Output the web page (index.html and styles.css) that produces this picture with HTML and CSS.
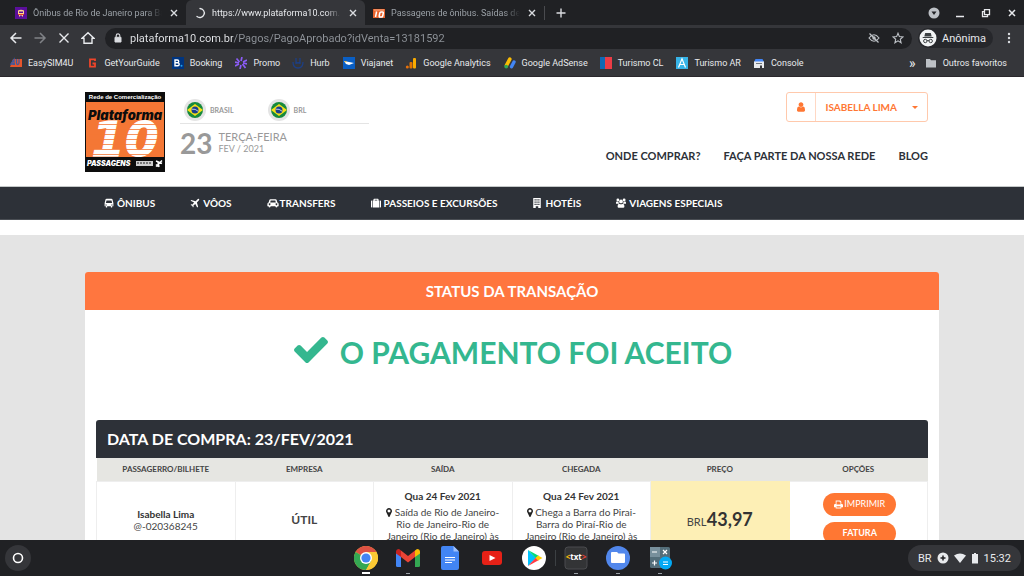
FILE: index.html
```html
<!DOCTYPE html>
<html lang="pt-BR">
<head>
    <meta charset="UTF-8">
    <meta name="viewport" content="width=device-width, initial-scale=1.0">
    <title>Plataforma 10 - Pagamento aprovado</title>
    <link rel="stylesheet" href="styles.css">
</head>
<body>
    <!-- shared icons -->
    <svg class="sprite" aria-hidden="true">
        <symbol id="i-close" viewBox="0 0 8 8"><path d="M1 1l6 6M7 1L1 7" fill="none" stroke="currentColor" stroke-width="1.4"/></symbol>
        <symbol id="i-pin" viewBox="384 128 1024 1536"><path d="M1152 640q0-106-75-181t-181-75-181 75-75 181 75 181 181 75 181-75 75-181zm256 0q0 109-33 179l-364 774q-16 33-47.5 52t-67.5 19-67.5-19-46.5-52l-365-774q-33-70-33-179 0-212 150-362t362-150 362 150 150 362z" fill="currentColor"/></symbol>
        <symbol id="i-flag" viewBox="0 0 22 22">
            <circle cx="11" cy="11" r="11" fill="#e4e4e4"/>
            <circle cx="11" cy="11" r="8" fill="#178a3c"/>
            <path d="M3 11l8-6 8 6-8 6z" fill="#f7e017"/>
            <circle cx="11" cy="11" r="3.5" fill="#1b3f8b"/>
            <path d="M7.8 10.2q3.500-.6 6.300 2" fill="none" stroke="#fff" stroke-width=".7"/>
        </symbol>
    </svg>

    <header class="browser">
        <div class="tabstrip">
            <div class="tab">
                <svg class="favicon" viewBox="0 0 12 12"><path fill="#5b0f9b" d="M0 0h12v12H0z"/><path fill="#ffd58a" d="M3 3.500Q6 2 9 3.500V8H8v1.500H7V8.500H5v1H4V8H3z"/><path fill="#5b0f9b" d="M4 4.500h4V6H4z"/><path fill="#e0402f" d="M3 7h6v1H3z"/></svg>
                <span class="tab-title">Ônibus de Rio de Janeiro para Ba</span>
                <button class="tab-close" aria-label="Fechar"><svg><use href="#i-close"/></svg></button>
            </div>
            <div class="tab active">
                <svg class="favicon" viewBox="0 0 12 12"><path d="M6 1.500A4.500 4.500 0 1 1 3 9.500" fill="none" stroke="#e8eaed" stroke-width="1.3" stroke-linecap="round"/></svg>
                <span class="tab-title">https://www.plataforma10.com.</span>
                <button class="tab-close" aria-label="Fechar"><svg><use href="#i-close"/></svg></button>
            </div>
            <div class="tab">
                <svg class="favicon" viewBox="0 0 12 12"><path fill="#e8632c" d="M0 1h12v10H0z"/><path fill="#2a1a14" d="M0 1h12v1H0z"/><path fill="#f9b08d" d="M1 2.500h10v1H1z"/><path d="M3.600 4.500L2.500 10M8 5h1.500q1 0 .8 1L9.700 9q-.2 1-1.200 1H7q-1 0-.8-1l.6-3q.2-1 1.200-1z" fill="none" stroke="#fff" stroke-width="1.500"/></svg>
                <span class="tab-title">Passagens de ônibus. Saídas de</span>
                <button class="tab-close" aria-label="Fechar"><svg><use href="#i-close"/></svg></button>
            </div>
            <button class="new-tab" aria-label="Nova guia"><svg viewBox="0 0 10 10"><path d="M5 .5v9M.5 5h9" stroke="#dadce0" stroke-width="1.4"/></svg></button>
            <div class="window-buttons">
                <button aria-label="Pesquisar guias"><svg viewBox="0 0 12 12"><circle cx="6" cy="6" r="5.500" fill="#bdc1c6"/><path d="M3.500 4.600h5L6 8z" fill="#202124"/></svg></button>
                <button aria-label="Minimizar"><svg viewBox="0 0 12 12"><path d="M2 9.500h8" stroke="#e8eaed" stroke-width="1.500"/></svg></button>
                <button aria-label="Restaurar"><svg viewBox="0 0 12 12"><path d="M4.500 2.700h5v5h-5zM4.500 4.700h-2v5h5v-2" fill="none" stroke="#e8eaed" stroke-width="1.300"/></svg></button>
                <button aria-label="Fechar janela"><svg viewBox="0 0 12 12"><path d="M3 3l6 6M9 3L3 9" stroke="#e8eaed" stroke-width="1.500"/></svg></button>
            </div>
        </div>

        <div class="toolbar">
            <button aria-label="Voltar"><svg viewBox="0 0 14 14"><path d="M12.500 7H2.500M7 2L2 7l5 5" fill="none" stroke="#e8eaed" stroke-width="1.500"/></svg></button>
            <button aria-label="Avançar"><svg viewBox="0 0 14 14"><path d="M1.500 7h10M7 2l5 5-5 5" fill="none" stroke="#808387" stroke-width="1.500"/></svg></button>
            <button aria-label="Parar"><svg viewBox="0 0 14 14"><path d="M2.500 2.500l9 9M11.500 2.500l-9 9" fill="none" stroke="#e8eaed" stroke-width="1.400"/></svg></button>
            <button aria-label="Início"><svg viewBox="0 0 14 14"><path d="M1 7.300L7 1.700l6 5.600H11V12.300H3V7.300z" fill="none" stroke="#e8eaed" stroke-width="1.400"/></svg></button>
            <div class="omnibox">
                <svg viewBox="0 0 10 10"><path d="M2 4.300h6v4.700H2z" fill="#dadce0" stroke="#dadce0"/><path d="M3.200 4V2.700a1.800 1.800 0 0 1 3.600 0V4" fill="none" stroke="#dadce0" stroke-width="1.100"/></svg>
                <input type="text" class="url" aria-label="Endereço" value="plataforma10.com.br/Pagos/PagoAprobado?idVenta=13181592">
                <button aria-label="Cookies bloqueados"><svg viewBox="0 0 12 12"><path d="M1 6q5-6.500 10 0-5 6.500-10 0z" fill="none" stroke="#bdc1c6" stroke-width="1.200"/><circle cx="6" cy="6" r="1.700" fill="#bdc1c6"/><path d="M1.500 1.500l9 9" stroke="#bdc1c6" stroke-width="1.300"/></svg></button>
                <button aria-label="Adicionar aos favoritos"><svg viewBox="0 0 12 12"><path d="M6 1.200l1.400 3.400 3.600.3-2.700 2.400.8 3.500L6 8.900l-3.100 1.900.8-3.500L1 4.900l3.600-.3z" fill="none" stroke="#bdc1c6" stroke-width="1.100"/></svg></button>
            </div>
            <button class="profile">
                <svg viewBox="0 0 18 18"><circle cx="9" cy="9" r="8.500" fill="#f1f3f4"/><path d="M6.200 4h5.600l.9 3.600H5.300zM3.700 8h10.600v1H3.700z" fill="#3c4043"/><path d="M8 11.800q1-.6 2 0" fill="none" stroke="#3c4043"/><circle cx="6.300" cy="12" r="1.700" fill="none" stroke="#3c4043"/><circle cx="11.700" cy="12" r="1.700" fill="none" stroke="#3c4043"/></svg>
                Anônima
            </button>
            <button class="more" aria-label="Menu"><svg viewBox="0 0 4 12"><g fill="#dadce0"><circle cx="2" cy="2" r="1.200"/><circle cx="2" cy="6" r="1.200"/><circle cx="2" cy="10" r="1.200"/></g></svg></button>
        </div>

        <nav class="bookmarks">
            <a href="#"><svg viewBox="0 0 12 12"><path d="M3 2h9v8H0z" fill="#e4552c"/><path d="M4 8V2.500L1 7h4M6.500 2v4q0 1.500 1.200 1.500T9 6V2" fill="none" stroke="#3b5aa0" stroke-width="1.300"/></svg>EasySIM4U</a>
            <a href="#"><svg viewBox="0 0 12 12"><path d="M9 4V2.300H4v7.400h5V6.500H6.500" fill="none" stroke="#f0452a" stroke-width="1.800"/></svg>GetYourGuide</a>
            <a href="#"><svg viewBox="0 0 12 12"><path d="M0 0h12v12H0z" fill="#003580"/><path d="M3 3h2.300a1.300 1.300 0 0 1 0 2.800H3zM3 5.800h2.700a1.500 1.500 0 0 1 0 3H3z" fill="none" stroke="#fff" stroke-width="1.400"/><circle cx="9.500" cy="8.700" r="1" fill="#21a0ec"/></svg>Booking</a>
            <a href="#"><svg viewBox="0 0 12 12"><path d="M7 0L6 4M5 12l1-4M1.500 1.500L4.500 5M7.500 7l3 4M12 3L8 5M0 9l4-2M0 5l4 1M8 6l4 1" stroke="#8b5cf6" stroke-width="1.700"/></svg>Promo</a>
            <a href="#"><svg viewBox="0 0 12 12"><path d="M1 5q0 6 5 6t5-6M4 1v6M8 1v6M4 5q2 2 4 0" fill="none" stroke="#1d3f84" stroke-width="1.300"/></svg>Hurb</a>
            <a href="#"><svg viewBox="0 0 12 12"><path d="M0 0h12v12H0z" fill="#0a5fc4"/><path d="M1 4l10 2-5 2-3-1z" fill="#fff"/><path d="M1 4l3 .6-1.500 1z" fill="#f4b51e"/></svg>Viajanet</a>
            <a href="#"><svg viewBox="0 0 12 12"><rect x="8" y="1" width="3" height="10.500" rx="1" fill="#f9ab00"/><rect x="4.500" y="5" width="3" height="6.500" rx="1" fill="#e37400"/><circle cx="2.300" cy="10" r="1.500" fill="#e8710a"/></svg>Google Analytics</a>
            <a href="#"><svg viewBox="0 0 12 12"><path d="M5.800 2.200L2.500 8.300" stroke="#fbbc04" stroke-width="3.600" stroke-linecap="round"/><path d="M10 5L7.500 9.700" stroke="#4285f4" stroke-width="3.400" stroke-linecap="round"/><circle cx="2.200" cy="9.600" r="1.900" fill="#34a853"/></svg>Google AdSense</a>
            <a href="#"><svg viewBox="0 0 12 12"><path d="M0 0h5v12H0z" fill="#0f69b4"/><path d="M5 0h7v12H5z" fill="#eb3c46"/></svg>Turismo CL</a>
            <a href="#"><svg viewBox="0 0 12 12"><path d="M0 0h12v12H0z" fill="#37b4e8"/><path d="M2.500 10.500L6 1.800l3.500 8.700M3.800 7.500h4.400" fill="none" stroke="#fff" stroke-width="1.200"/></svg>Turismo AR</a>
            <a href="#"><svg viewBox="0 0 12 12"><path d="M2.500 2h7L11 5H1z" fill="#4285f4"/><path d="M1 4.500h10V11H9V8.500H7V11H1z" fill="#e8eaed"/><path d="M3 6h6v1H3z" fill="#70757a"/></svg>Console</a>
            <span class="overflow">»</span>
            <a href="#"><svg viewBox="0 0 12 12"><path d="M1 2h4l1 1.300h5V10.500H1z" fill="#bdc1c6"/></svg>Outros favoritos</a>
        </nav>
    </header>

    <main class="page">
        <div class="site-header container">
            <a class="logo" href="#">
                <svg viewBox="0 0 80 80" role="img" aria-label="Plataforma 10">
                    <path d="M0 0h80v80H0z" fill="#0d0d0d"/>
                    <path d="M1 10h78v55H1z" fill="#f47735"/>
                    <text x="40" y="7" class="logo-top">Rede de Comercialização</text>
                    <text x="40" y="28" class="logo-name">Plataforma</text>
                    <text x="40" y="64" class="logo-ten">10</text>
                    <path d="M1 32.500h78M1 37.500h78M1 42.500h78M1 47.500h78M1 52.500h78M1 57.500h78M1 62.500h78" stroke="#f47735" stroke-width=".8"/>
                    <text x="2" y="74" class="logo-foot">PASSAGENS</text>
                    <path d="M51 69h17v5H51z" fill="#cfcfcf"/><path d="M52 71h15" stroke="#222" stroke-dasharray="2 1"/>
                    <path d="M71 74.500l6-6M71 69l6 2.500M74 75l-1-5M71 72.500l2 2" stroke="#fff" stroke-width="1.500" fill="none"/>
                </svg>
            </a>
            <div class="locale">
                <div class="flags">
                    <button><svg><use href="#i-flag"/></svg>BRASIL</button>
                    <button><svg><use href="#i-flag"/></svg>BRL</button>
                </div>
                <div class="date">
                    <strong>23</strong>
                    <div><span class="weekday">TERÇA-FEIRA</span><span class="month">FEV / 2021</span></div>
                </div>
            </div>
            <div class="account">
                <button class="user">
                    <span class="user-icon"><svg viewBox="256 128 1280 1536"><path d="M1536 1399q0 109-62.500 187t-150.500 78h-854q-88 0-150.500-78t-62.500-187q0-85 8.500-160.500t31.500-152 58.500-131 94-89 134.500-34.500q131 128 313 128t313-128q76 0 134.500 34.500t94 89 58.500 131 31.500 152 8.500 160.500zm-256-887q0 159-112.500 271.500t-271.500 112.500-271.500-112.500-112.500-271.500 112.500-271.500 271.500-112.500 271.500 112.500 112.500 271.500z" fill="currentColor"/></svg></span>
                    <span class="user-name">ISABELLA LIMA</span>
                    <svg class="caret" viewBox="0 0 6 3"><path d="M0 0h6L3 3z" fill="currentColor"/></svg>
                </button>
                <nav class="links">
                    <a href="#">ONDE COMPRAR?</a>
                    <a href="#">FAÇA PARTE DA NOSSA REDE</a>
                    <a href="#">BLOG</a>
                </nav>
            </div>
        </div>

        <nav class="main-nav">
            <div class="container">
                <a href="#"><svg viewBox="0 0 16 16"><path fill-rule="evenodd" d="M4 1h8q2 0 2 3l1 4v5h-2v2h-2v-2H5v2H3v-2H1V8l1-4q0-3 2-3zm0 3L3 8h10l-1-4zm0 6.500a1 1 0 1 0 0 1.500zm8 0v1.500a1 1 0 1 0 0-1.500z" fill="currentColor"/></svg>ÔNIBUS</a>
                <a href="#"><svg viewBox="0 0 16 16"><path d="M14.500 1.500q1 1-.8 2.800L11 7l2 7-1.500 1L8.500 9.500 5.500 12l.3 2-1 1-1.300-2.500L1 11l1-1 2 .3 2.500-3L1 4.500 2 3l7 2 2.700-2.700q1.800-1.800 2.800-.8z" fill="currentColor"/></svg>VÔOS</a>
                <a href="#" class="tight"><svg viewBox="0 0 18 16"><path fill-rule="evenodd" d="M5 2h8q1.500 0 2 1.500L16 7q2 .5 2 2.500V13h-2v1.500q-1.500 1.500-3 0V13H5v1.500q-1.500 1.500-3 0V13H0V9.500Q0 7.500 2 7l1-3.500Q3.500 2 5 2zm.3 2L4.500 7h9l-.8-3zM3.500 8.500a1.400 1.400 0 1 0 .1 0zm11 0a1.400 1.400 0 1 0 .1 0z" fill="currentColor"/></svg>TRANSFERS</a>
                <a href="#"><svg viewBox="0 0 16 16"><path fill-rule="evenodd" d="M4 4V2q0-1 1-1h6q1 0 1 1v2h1v11H3V4zm2 0h4V2.700H6zM0 5q0-1 1-1h1v11H1q-1 0-1-1zm14-1h1q1 0 1 1v9q0 1-1 1h-1z" fill="currentColor"/></svg>PASSEIOS E EXCURSÕES</a>
                <a href="#"><svg viewBox="0 0 16 16"><path fill-rule="evenodd" d="M2 0h12v16h-4v-3H6v3H2zm2 2v2h2V2zm3 0v2h2V2zm3 0v2h2V2zM4 5.500v2h2v-2zm3 0v2h2v-2zm3 0v2h2v-2zM4 9v2h2V9zm3 0v2h2V9zm3 0v2h2V9z" fill="currentColor"/></svg>HOTÉIS</a>
                <a href="#"><svg viewBox="0 0 16 16"><g fill="currentColor"><circle cx="3" cy="3" r="2.300"/><circle cx="13" cy="3" r="2.300"/><circle cx="8" cy="5.500" r="3"/><path d="M0 9V7q0-1.500 1.500-1.500H4q0 2 1 3.500zM16 9V7q0-1.500-1.500-1.500H12q0 2-1 3.500zM5 9q3 2 6 0 2.500.5 2.500 4 0 2.500-2 2.500h-7q-2 0-2-2.500Q2.500 9.500 5 9z"/></g></svg>VIAGENS ESPECIAIS</a>
            </div>
        </nav>

        <div class="content">
            <section class="card container">
                <h1>STATUS DA TRANSAÇÃO</h1>
                <p class="accepted">
                    <svg viewBox="121 334 1550 1188"><path d="M1671 566q0 40-28 68l-724 724-136 136q-28 28-68 28t-68-28l-136-136-362-362q-28-28-28-68t28-68l136-136q28-28 68-28t68 28l294 295 656-657q28-28 68-28t68 28l136 136q28 28 28 68z" fill="currentColor"/></svg>
                    O PAGAMENTO FOI ACEITO
                </p>
                <div class="purchase">
                    <h2>DATA DE COMPRA: 23/FEV/2021</h2>
                    <table>
                        <thead>
                            <tr>
                                <th>PASSAGERRO/BILHETE</th>
                                <th>EMPRESA</th>
                                <th>SAÍDA</th>
                                <th>CHEGADA</th>
                                <th>PREÇO</th>
                                <th>OPÇÕES</th>
                            </tr>
                        </thead>
                        <tbody>
                            <tr>
                                <td><strong>Isabella Lima</strong><br>@-020368245</td>
                                <td class="company">ÚTIL</td>
                                <td class="trip"><strong>Qua 24 Fev 2021</strong><svg><use href="#i-pin"/></svg> Saída de Rio de Janeiro-Rio de Janeiro-Rio de Janeiro (Rio de Janeiro) às</td>
                                <td class="trip"><strong>Qua 24 Fev 2021</strong><svg><use href="#i-pin"/></svg> Chega a Barra do Pirai-Barra do Piraí-Rio de Janeiro (Rio de Janeiro) às</td>
                                <td class="price">BRL <strong>43,97</strong></td>
                                <td class="options">
                                    <button class="print"><svg viewBox="0 0 16 16"><path fill-rule="evenodd" d="M3 1h8l2 2v4h1q2 0 2 2v4h-3v2H3v-2H0V9q0-2 2-2h1zm1.500 1.500V8h7V4H10V2.500zm0 8.500v2.500h7V11z" fill="currentColor"/></svg>IMPRIMIR</button>
                                    <button>FATURA</button>
                                </td>
                            </tr>
                        </tbody>
                    </table>
                </div>
            </section>
        </div>
    </main>

    <footer class="shelf">
        <button class="launcher" aria-label="Acesso rápido"><svg viewBox="0 0 26 26"><circle cx="13" cy="13" r="13" fill="#35363a"/><circle cx="13" cy="13" r="4.500" fill="none" stroke="#fff" stroke-width="1.600"/></svg></button>
        <div class="apps">
            <button class="app current" aria-label="Chrome"><svg viewBox="0 0 24 24"><circle cx="12" cy="12" r="12" fill="#fcc934"/><path d="M12 12L1.600 6A12 12 0 0 1 22.400 6z" fill="#dd5144"/><path d="M1.600 6A12 12 0 0 0 12 24l5.200-9z" fill="#34a853"/><path d="M12 6h10.400A12 12 0 0 1 12 24l5.200-9z" fill="#fcc934"/><circle cx="12" cy="12" r="6" fill="#fff"/><circle cx="12" cy="12" r="4.600" fill="#4285f4"/></svg></button>
            <button class="app open" aria-label="Gmail"><svg viewBox="0 0 24 24"><path d="M0 6h5v15H1.500Q0 21 0 19.500z" fill="#4285f4"/><path d="M19 6h5v13.500q0 1.500-1.500 1.500H19z" fill="#34a853"/><path d="M5 4.500l7 5.500 7-5.500V11l-7 5.500L5 11z" fill="#ea4335"/><path d="M0 6q0-3 3-3l2 1.500V11L0 7.500z" fill="#c5221f"/><path d="M24 6q0-3-3-3l-2 1.500V11l5-3.500z" fill="#fbbc04"/></svg></button>
            <button class="app" aria-label="Documentos"><svg viewBox="0 0 24 24"><path d="M5 0h10.500L21 5.500V22q0 2-2 2H5q-2 0-2-2V2q0-2 2-2z" fill="#4285f4"/><path d="M15.500 0L21 5.500h-5.500z" fill="#a1c2fa"/><path d="M7 11.500h10M7 14h10M7 16.500h7" stroke="#fff" stroke-width="1.200"/></svg></button>
            <button class="app" aria-label="YouTube"><svg viewBox="0 0 24 24"><rect x="2" y="5" width="20" height="14" rx="3" fill="#e62117"/><path d="M9.500 9l6 3-6 3z" fill="#fff"/></svg></button>
            <button class="app" aria-label="Play Store"><svg viewBox="0 0 24 24"><circle cx="12" cy="12" r="12" fill="#fff"/><path d="M6 4v16l8-8z" fill="#00c3ff"/><path d="M6 4l11 6-3 2.500z" fill="#00d97e"/><path d="M6 20l11-6-3-2.500z" fill="#ff3a44"/><path d="M16 9.500l4.500 2.500-4.500 2.500-2.500-2.500z" fill="#ffd000"/></svg></button>
            <button class="app open divided" aria-label="Text"><svg viewBox="0 0 24 24"><rect x="1" y="1" width="22" height="22" rx="3" fill="#333436" stroke="#4a4b4e"/><text x="12" y="14" class="txt-icon"><tspan fill="#fbbc04">&lt;</tspan>txt<tspan fill="#ea4335">&gt;</tspan></text></svg></button>
            <button class="app open" aria-label="Arquivos"><svg viewBox="0 0 24 24"><circle cx="12" cy="12" r="12" fill="#5187ec"/><path d="M6 6h5l1.500 1.500H18q1 0 1 1V16q0 1-1 1H6q-1 0-1-1V7q0-1 1-1z" fill="#fff"/></svg></button>
            <button class="app open" aria-label="Calculadora"><svg viewBox="0 0 24 24"><rect x="2" y="1" width="20" height="21" rx="1.500" fill="#546e7a"/><path d="M2 1h10v10H2z" fill="#78909c"/><path d="M4 6h5M15 4l4 4M19 4l-4 4M4 17h5M6.500 14.500v5" stroke="#fff" stroke-width="1.200"/><circle cx="17.500" cy="17" r="6.500" fill="#03a9f4"/><path d="M15 16h5M15 18.500h5" stroke="#fff" stroke-width="1.200"/></svg></button>
        </div>
        <button class="status">
            BR
            <svg viewBox="0 0 12 12"><circle cx="6" cy="6" r="5.500" fill="#e8eaed"/><path d="M6 3.500v5M3.500 6h5" stroke="#202124" stroke-width="1.500"/></svg>
            <svg viewBox="0 0 12 12"><path d="M0 3.500Q6-.5 12 3.500L6 11z" fill="#e8eaed"/></svg>
            <svg class="battery" viewBox="0 0 8 12"><path d="M1 2h2V1h2v1h2v9.500H1z" fill="#e8eaed"/></svg>
            <span>15:32</span>
        </button>
    </footer>
</body>
</html>
```
FILE: styles.css
```css
* {
    box-sizing: border-box;
}
body {
    margin: 0;
    height: 100vh;
    display: flex;
    flex-direction: column;
    overflow: hidden;
    font-family: Lato, "Liberation Sans", sans-serif;
    color: #2d3138;
    background-color: #fff;
}
button {
    font: inherit;
    color: inherit;
    background: none;
    border: none;
    padding: 0;
    cursor: pointer;
}
a {
    color: inherit;
    text-decoration: none;
}
svg {
    display: block;
    flex: none;
}
.sprite {
    position: absolute;
    width: 0;
    height: 0;
}

/* browser */
.browser {
    flex: none;
    font-family: Roboto, "Liberation Sans", sans-serif;
    font-size: 9px;
    color: #e8eaed;
    background-color: #35363a;
    border-bottom: 1px solid #2a272c;
}
.tabstrip {
    display: flex;
    align-items: center;
    height: 25px;
    padding-left: 7px;
    background-color: #202124;
}
.tab {
    display: flex;
    align-items: center;
    width: 179px;
    height: 25px;
    padding: 0 6px 0 8px;
    gap: 6px;
    color: #9aa0a6;
}
.tab.active {
    color: #e8eaed;
    background-color: #35363a;
    border-radius: 6px 6px 0 0;
}
.favicon {
    width: 12px;
    height: 12px;
}
.tab-title {
    flex: 1;
    overflow: hidden;
    white-space: nowrap;
    -webkit-mask-image: linear-gradient(90deg, #000 88%, transparent);
    mask-image: linear-gradient(90deg, #000 88%, transparent);
}
.tab-close svg {
    width: 8px;
    height: 8px;
    margin: 0 2px;
    color: #dadce0;
}
.new-tab {
    height: 14px;
    padding: 0 11px;
    border-left: 1px solid #4a4b4f;
}
.new-tab svg {
    width: 10px;
    height: 10px;
}
.window-buttons {
    display: flex;
    gap: 14px;
    margin-left: auto;
    padding-right: 6px;
}
.window-buttons svg {
    width: 12px;
    height: 12px;
}
.toolbar {
    display: flex;
    align-items: center;
    gap: 10px;
    height: 26px;
    padding: 0 9px;
}
.toolbar > button svg {
    width: 14px;
    height: 14px;
}
.omnibox {
    flex: 1;
    display: flex;
    align-items: center;
    gap: 12px;
    height: 21px;
    padding: 0 8px;
    border-radius: 11px;
    background-color: #202124;
}
.omnibox svg {
    width: 12px;
    height: 12px;
}
.omnibox > svg {
    width: 10px;
    height: 10px;
}
.url {
    flex: 1;
    min-width: 0;
    margin-left: -5px;
    padding: 0;
    border: none;
    outline: none;
    font: 11px Roboto, "Liberation Sans", sans-serif;
    color: transparent;
    background: linear-gradient(90deg, #e8eaed 103px, #8f949a 103px);
    -webkit-background-clip: text;
    background-clip: text;
}
.profile {
    display: flex;
    align-items: center;
    gap: 5px;
    height: 20px;
    padding: 0 7px 0 1px;
    margin: 0 2px 0 -4px;
    border-radius: 10px;
    font-size: 11px;
    background-color: #26272b;
}
.toolbar .profile svg {
    width: 18px;
    height: 18px;
}
.toolbar .more svg {
    width: 4px;
    height: 12px;
    margin: 0 4px 0 2px;
}
.bookmarks {
    display: flex;
    align-items: center;
    gap: 12px;
    height: 25px;
    padding: 0 17px 2px 10px;
    white-space: nowrap;
}
.bookmarks a {
    display: flex;
    align-items: center;
    gap: 6px;
}
.bookmarks a:nth-child(even) {
    margin-left: 1px;
}
.bookmarks svg {
    width: 12px;
    height: 12px;
}
.overflow {
    margin: 0 -3px 0 auto;
    font-size: 14px;
}

/* site */
.page {
    flex: 1;
    min-height: 0;
    overflow: hidden;
}
.container {
    width: 100%;
    max-width: 854px;
    margin: 0 auto;
}
.site-header {
    display: flex;
    gap: 15px;
    padding: 15px 11px 14px 0;
}
.logo svg {
    width: 80px;
    height: 80px;
}
.logo-top,
.logo-name,
.logo-ten {
    text-anchor: middle;
}
.logo-top {
    font: bold 6px "Liberation Sans", sans-serif;
    fill: #fff;
}
.logo-name {
    font: italic 900 13px Inter, sans-serif;
    fill: #0d0d0d;
}
.logo-ten {
    font: italic bold 48px "DejaVu Sans", sans-serif;
    fill: #fff;
    stroke: #fff;
    stroke-width: 1;
}
.logo-foot {
    font: italic 900 7px Inter, sans-serif;
    fill: #fff;
}
.locale {
    width: 189px;
    padding-top: 7px;
    color: #999;
}
.flags {
    display: flex;
    gap: 34px;
    padding: 0 0 2px 4px;
    border-bottom: 1px solid #e4e4e4;
}
.flags button {
    display: flex;
    align-items: center;
    gap: 4px;
    font-size: 7px;
    font-weight: bold;
}
.flags svg {
    width: 22px;
    height: 22px;
}
.date {
    display: flex;
    align-items: center;
    gap: 6px;
    padding-top: 3px;
}
.date strong {
    font-size: 28px;
    line-height: 32px;
}
.weekday,
.month {
    display: block;
    font-size: 11px;
    line-height: 12px;
}
.month {
    font-size: 9px;
}
.account {
    display: flex;
    flex-direction: column;
    align-items: flex-end;
    gap: 27px;
    margin-left: auto;
}
.user {
    display: flex;
    align-items: center;
    height: 30px;
    border: 1px solid #ffc9ac;
    border-radius: 3px;
    font-size: 10px;
    font-weight: bold;
    color: #ff7733;
}
.user-icon {
    display: flex;
    align-items: center;
    height: 28px;
    padding: 0 10px;
    border-right: 1px solid #ffd8c4;
}
.user-icon svg {
    width: 8px;
    height: 10px;
}
.user-name {
    padding: 0 15px 0 9px;
}
.caret {
    width: 6px;
    height: 3px;
    margin-right: 9px;
}
.links {
    display: flex;
    gap: 23px;
    font-size: 11px;
    line-height: 14px;
    font-weight: bold;
}
.main-nav {
    color: #fff;
    background-color: #2d3138;
    border-top: 1px solid #c4c8c8;
    border-bottom: 1px solid #4a4e54;
}
.main-nav .container {
    display: flex;
    gap: 35px;
    padding-left: 19px;
}
.main-nav a {
    display: flex;
    align-items: center;
    gap: 3px;
    height: 32px;
    font-size: 10px;
    font-weight: bold;
}
.main-nav a.tight {
    gap: 1px;
}
.main-nav svg {
    width: 10px;
    height: 10px;
}
.main-nav .tight svg {
    width: 12px;
}
.content {
    margin-top: 15px;
    padding-top: 37px;
    background-color: #e4e4e4;
}
.card {
    padding-bottom: 20px;
    border-radius: 3px 3px 0 0;
    background-color: #fff;
}
.card h1 {
    margin: 0;
    font-size: 15px;
    line-height: 38px;
    font-weight: bold;
    text-align: center;
    color: #fff;
    background-color: #ff763f;
    border-radius: 3px 3px 0 0;
}
.accepted {
    display: flex;
    justify-content: center;
    gap: 12px;
    margin: 0;
    padding: 22px 0 48px 2px;
    font-size: 30px;
    line-height: 40px;
    font-weight: bold;
    color: #34b78f;
}
.accepted svg {
    width: 34px;
    height: 26px;
    margin-top: 5px;
}
.purchase {
    margin: 0 11px;
}
.purchase h2 {
    margin: 0;
    padding-left: 11px;
    font-size: 16px;
    line-height: 38px;
    font-weight: bold;
    color: #fff;
    background-color: #2d3138;
    border-radius: 3px 3px 0 0;
}
table {
    width: 100%;
    table-layout: fixed;
    border-collapse: collapse;
    text-align: center;
}
th {
    height: 23px;
    padding: 0;
    font-size: 8px;
    color: #444;
    background-color: #e6e6e2;
}
td {
    height: 78px;
    padding: 8px 9px;
    font-size: 10px;
    line-height: 12px;
    color: #444;
    border: 1px solid #eee;
}
td strong {
    color: #333;
}
td.company {
    font-size: 12px;
    font-weight: bold;
}
td.trip {
    vertical-align: top;
}
.trip strong {
    display: block;
    margin-bottom: 4px;
}
.trip svg {
    display: inline-block;
    width: 6px;
    height: 9px;
    color: #222;
    vertical-align: -1px;
}
td.price {
    font-size: 11px;
    background-color: #fdefb5;
    border-color: #fdefb5;
}
.price strong {
    margin-left: -2px;
    font-size: 18px;
}
td.options {
    padding: 11px 6px 0 9px;
    vertical-align: top;
}
.options button {
    display: flex;
    align-items: center;
    justify-content: center;
    gap: 1px;
    width: 73px;
    height: 23px;
    margin: 0 auto 6px;
    border-radius: 12px;
    font-size: 9px;
    font-weight: bold;
    color: #fff;
    background-color: #ff7733;
}
.options .print {
    font-weight: normal;
}
.options svg {
    width: 9px;
    height: 9px;
}

/* shelf */
.shelf {
    flex: none;
    display: grid;
    grid-template-columns: 1fr auto 1fr;
    align-items: center;
    height: 36px;
    padding: 0 3px 0 5px;
    font-family: Roboto, "Liberation Sans", sans-serif;
    color: #e8eaed;
    background-color: #202124;
}
.launcher {
    justify-self: start;
}
.launcher svg {
    width: 26px;
    height: 26px;
}
.apps {
    display: flex;
}
.app {
    position: relative;
    display: flex;
    align-items: center;
    justify-content: center;
    width: 42px;
    height: 36px;
}
.app svg {
    width: 24px;
    height: 24px;
}
.app.current::after,
.app.open::after {
    content: "";
    position: absolute;
    bottom: 2px;
    width: 4px;
    height: 1px;
    background-color: #9aa0a6;
}
.app.current::after {
    width: 8px;
    height: 2px;
    background-color: #fff;
}
.app.divided::before {
    content: "";
    position: absolute;
    left: 0;
    width: 1px;
    height: 16px;
    background-color: #3c4043;
}
.txt-icon {
    font: bold 8px "Open Sans", sans-serif;
    fill: #fff;
    text-anchor: middle;
}
.status {
    justify-self: end;
    display: flex;
    align-items: center;
    gap: 5px;
    height: 26px;
    padding: 0 10px;
    border-radius: 13px;
    font-size: 11px;
    background-color: #35363a;
}
.status svg {
    width: 12px;
    height: 12px;
}
.status .battery {
    width: 8px;
}
```
